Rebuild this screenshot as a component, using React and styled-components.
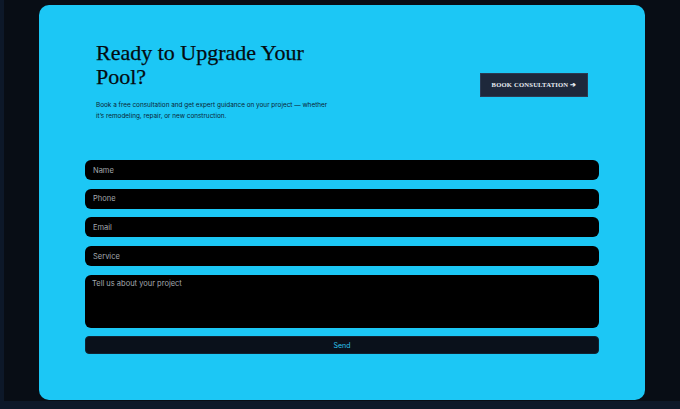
import styled, { createGlobalStyle } from 'styled-components'

const GlobalStyle = createGlobalStyle`
  html, body {
    margin: 0;
    padding: 0;
    background: #0d1829;
  }
  * { box-sizing: border-box; }
`

function App() {
  return (
    <>
      <GlobalStyle />
      <Page>
        <Card>
          <Header>
            <Intro>
              <Title>Ready to Upgrade Your Pool?</Title>
              <Lead>
                Book a free consultation and get expert guidance on your project — whether
                it’s remodeling, repair, or new construction.
              </Lead>
            </Intro>
            <BookButton type='button'>BOOK CONSULTATION ➔</BookButton>
          </Header>

          <Form onSubmit={(e) => e.preventDefault()}>
            <Field type='text' name='name' placeholder='Name' />
            <Field type='tel' name='phone' placeholder='Phone' />
            <Field type='email' name='email' placeholder='Email' />
            <Field type='text' name='service' placeholder='Service' />
            <Message name='message' placeholder='Tell us about your project' />
            <Send type='submit'>Send</Send>
          </Form>
        </Card>
      </Page>
    </>
  )
}

export default App

const Page = styled.div`
  margin-left: 4px;
  height: 401px;
  padding: 5px 35px 0;
  background: #080d15;
`

const Card = styled.div`
  height: 395px;
  background: #1cc7f5;
  border-radius: 10px;
  padding-top: 36px;
`

const Header = styled.div`
  display: flex;
  align-items: center;
  justify-content: space-between;
  padding: 0 57px;
`

const Intro = styled.div`
  width: 240px;
`

const Title = styled.h2`
  margin: 0 0 11px;
  font-family: "Liberation Serif", "DejaVu Serif", serif;
  font-weight: 400;
  font-size: 22px;
  line-height: 24px;
  color: #040b10;
  -webkit-text-stroke: 0.25px #040b10;
`

const Lead = styled.p`
  margin: 0;
  font-family: Inter, "Noto Sans", sans-serif;
  font-size: 6.4px;
  line-height: 11px;
  color: #0b2433;
`

const BookButton = styled.button`
  width: 108px;
  height: 24px;
  margin-top: 6px;
  padding: 0;
  background: #1e283b;
  border: 1px solid #2c3a52;
  color: #e8edf4;
  font-family: "Liberation Serif", serif;
  font-weight: 700;
  font-size: 6.6px;
  letter-spacing: 0.2px;
  cursor: pointer;
`

const Form = styled.form`
  display: flex;
  flex-direction: column;
  gap: 8.7px;
  margin-top: 38px;
  padding: 0 46px;
`

const fieldStyles = `
  width: 100%;
  background: #000;
  border: none;
  border-radius: 6px;
  color: #ddd;
  font-family: Inter, "Noto Sans", sans-serif;
  font-size: 7.5px;
  outline: none;
  &::placeholder { color: #a4a9ae; }
`

const Field = styled.input`
  ${fieldStyles}
  height: 20px;
  padding: 0 8px;
`

const Message = styled.textarea`
  ${fieldStyles}
  height: 53px;
  padding: 4px 7px;
  resize: none;
`

const Send = styled.button`
  height: 18px;
  background: #0a111b;
  border: 1px solid #0f2432;
  border-radius: 4px;
  color: #2cc6ee;
  font-family: Inter, "Noto Sans", sans-serif;
  font-size: 7px;
  cursor: pointer;
`
